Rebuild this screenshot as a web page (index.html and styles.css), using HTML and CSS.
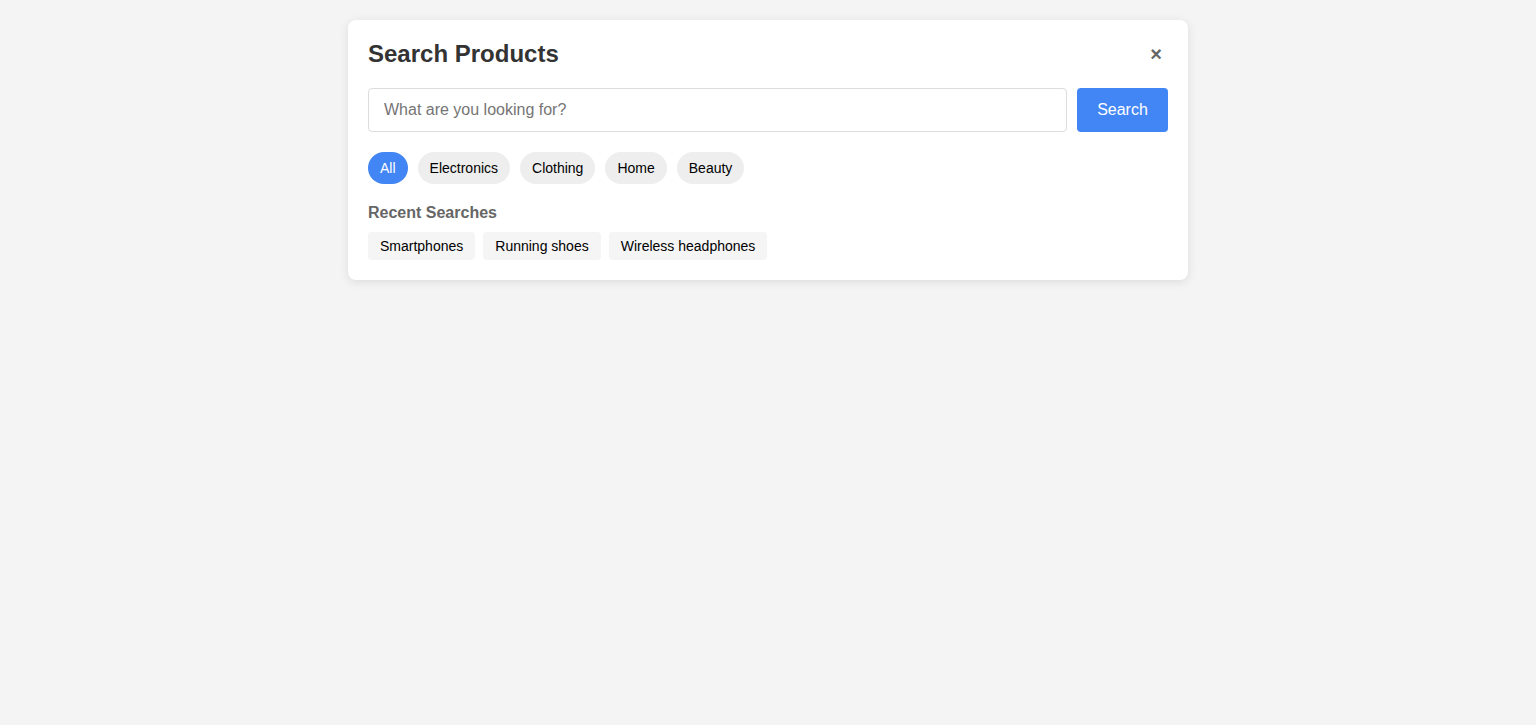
FILE: index.html
```html
<!DOCTYPE html>
<html lang="en">
<head>
<meta charset="utf-8">
<title>Search Products</title>
<link rel="stylesheet" href="styles.css">
</head>
<body>
<div class="modal">
  <div class="modal-header">
    <h2 class="modal-title">Search Products</h2>
    <button class="close-btn" aria-label="Close">&times;</button>
  </div>
  <div class="search-row">
    <input class="search-input" type="text" placeholder="What are you looking for?">
    <button class="search-btn">Search</button>
  </div>
  <div class="chips">
    <span class="chip active">All</span>
    <span class="chip">Electronics</span>
    <span class="chip">Clothing</span>
    <span class="chip">Home</span>
    <span class="chip">Beauty</span>
  </div>
  <h3 class="recent-title">Recent Searches</h3>
  <div class="recent">
    <span class="recent-item">Smartphones</span>
    <span class="recent-item">Running shoes</span>
    <span class="recent-item">Wireless headphones</span>
  </div>
</div>
</body>
</html>
```
FILE: styles.css
```css
* { box-sizing: border-box; }
html, body { margin: 0; padding: 0; }
body {
  background: #f4f4f4;
  font-family: "Liberation Sans", Arial, sans-serif;
  padding: 20px 0;
}
.modal {
  width: 840px;
  margin: 0 auto;
  background: #fff;
  border-radius: 8px;
  box-shadow: 0 2px 10px rgba(0,0,0,0.1);
  padding: 20px;
}
.modal-header {
  display: flex;
  justify-content: space-between;
  align-items: center;
  margin-bottom: 20px;
}
.modal-title {
  margin: 0;
  font-size: 24px;
  line-height: 28px;
  font-weight: bold;
  color: #333;
}
.close-btn {
  background: none;
  border: none;
  font-size: 20px;
  line-height: 20px;
  color: #666;
  cursor: pointer;
  padding: 0 6px;
  font-family: "Liberation Sans", Arial, sans-serif;
  font-weight: bold;
}
.search-row {
  display: flex;
  gap: 10px;
  margin-bottom: 20px;
}
.search-input {
  flex: 1;
  height: 44px;
  border: 1px solid #ddd;
  border-radius: 4px;
  padding: 0 15px;
  font-size: 16px;
  font-family: "Liberation Sans", Arial, sans-serif;
  color: #333;
}
.search-input::placeholder { color: #757575; }
.search-btn {
  width: 91px;
  height: 44px;
  background: #4285f4;
  color: #fff;
  border: none;
  border-radius: 4px;
  font-size: 16px;
  font-family: "Liberation Sans", Arial, sans-serif;
  cursor: pointer;
}
.chips {
  display: flex;
  gap: 10px;
  margin-bottom: 20px;
}
.chip {
  height: 32px;
  line-height: 32px;
  padding: 0 12px;
  border-radius: 16px;
  background: #eee;
  font-size: 14px;
  color: #000;
}
.chip.active {
  background: #4285f4;
  color: #fff;
}
.recent-title {
  margin: 0 0 10px;
  font-size: 16px;
  line-height: 18px;
  font-weight: bold;
  color: #666;
}
.recent {
  display: flex;
  gap: 8px;
}
.recent-item {
  height: 28px;
  line-height: 28px;
  padding: 0 12px;
  background: #f5f5f5;
  border-radius: 4px;
  font-size: 14px;
  color: #000;
}
```
